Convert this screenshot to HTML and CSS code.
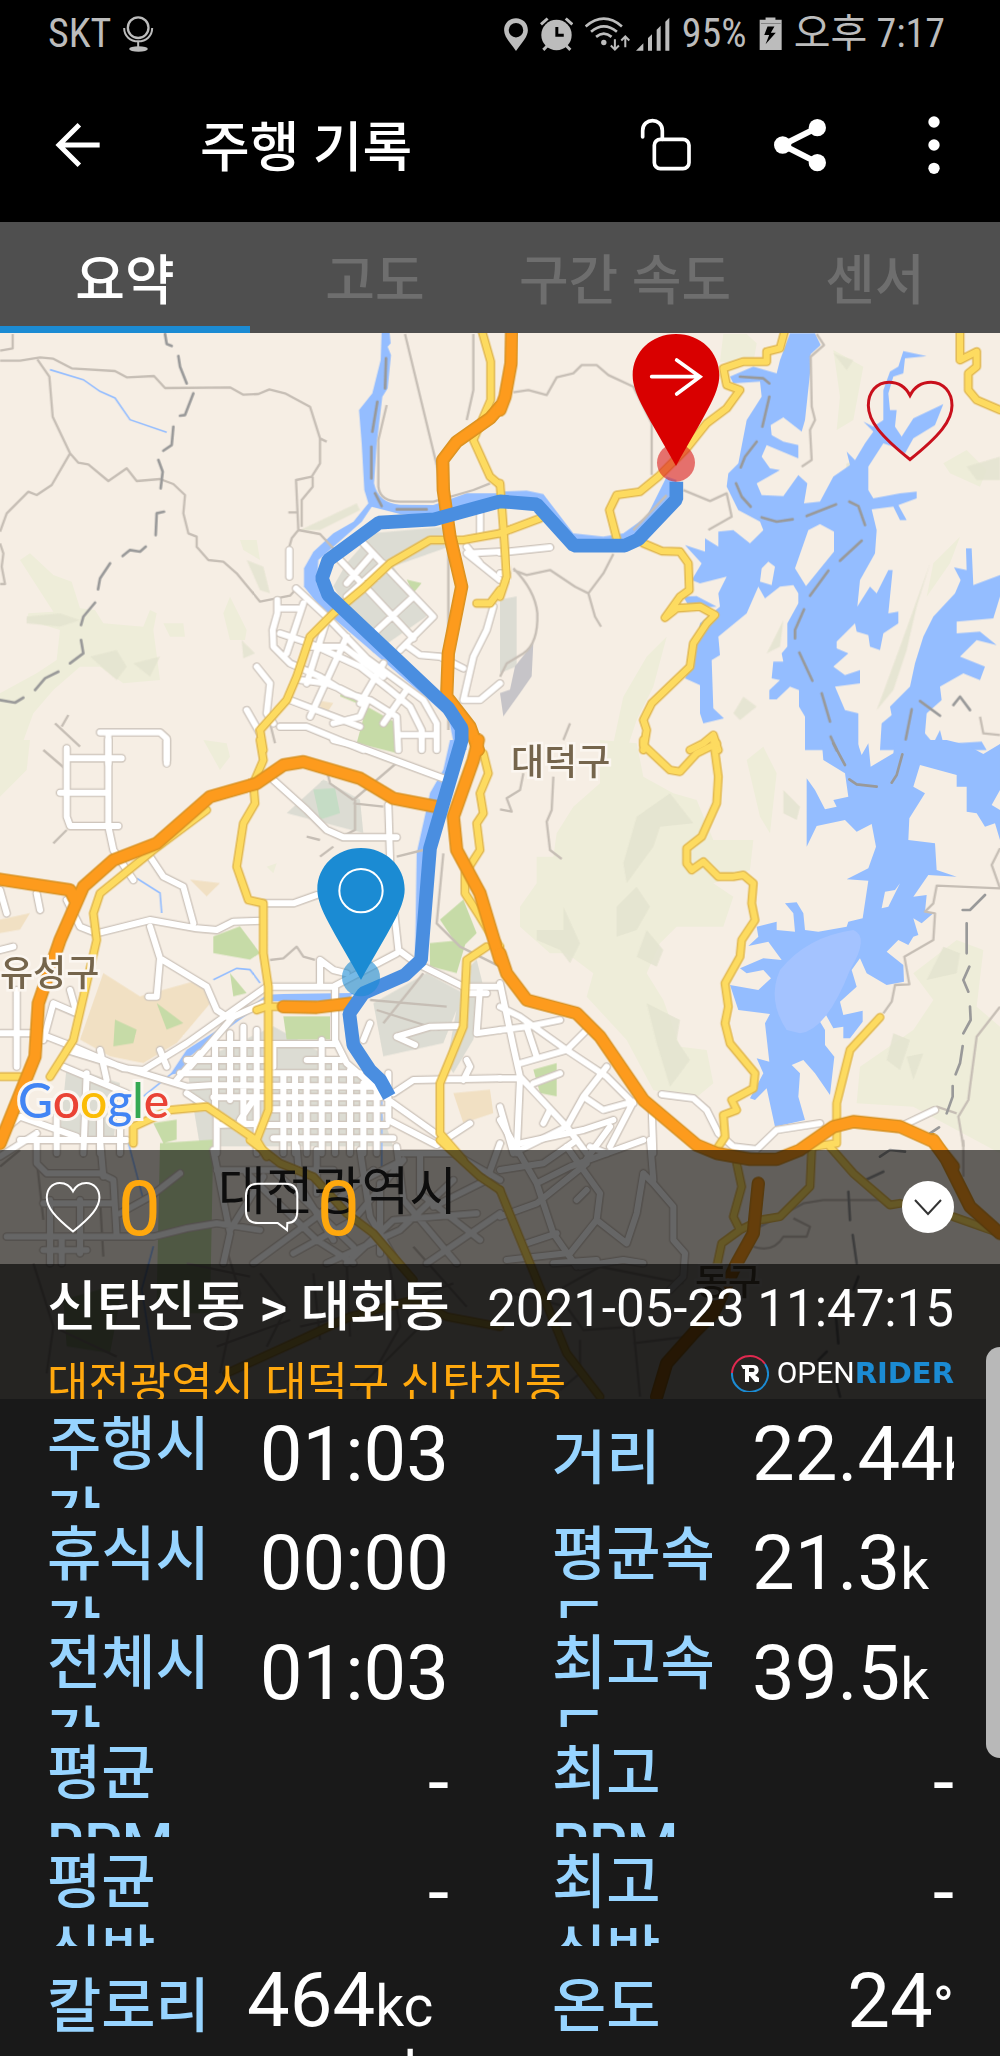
FILE: index.html
```html
<!DOCTYPE html>
<html lang="ko">
<head>
<meta charset="utf-8">
<meta name="viewport" content="width=device-width, initial-scale=1">
<title>주행 기록</title>
<link rel="stylesheet" href="styles.css">
</head>
<body>
<svg class="defs" aria-hidden="true">
  <symbol id="heart" viewBox="1098 146 264 248"><path vector-effect="non-scaling-stroke" d="M1230 195C1215 165 1190 155 1167 155C1130 155 1105 185 1105 225C1105 270 1140 315 1230 387C1320 315 1356 270 1356 225C1356 185 1330 155 1293 155C1270 155 1245 165 1230 195Z"/></symbol>
</svg>
<div class="screen">
  <header class="status">
    <div class="status-group">
      <span class="status-text">SKT</span>
      <svg class="mic" viewBox="363 46 92 108"><g fill="none" stroke="currentColor"><circle cx="408" cy="81" r="31" stroke-width="7"/><path d="M366 82C366 106 384 122 408 122S450 106 450 82M408 122V140" stroke-width="6"/></g><ellipse cx="409" cy="145" rx="28" ry="8" fill="currentColor"/></svg>
    </div>
    <div class="status-group">
      <svg class="pin-icon" viewBox="0 50 72 100"><path fill="currentColor" fill-rule="evenodd" d="M36 51C56 51 72 66 72 87C72 106 56 122 36 150C16 122 0 106 0 87C0 66 16 51 36 51ZM36 65A22 22 0 1 0 36 109A22 22 0 1 0 36 65Z"/></svg>
      <svg class="alarm" viewBox="108 50 100 102"><path stroke="currentColor" stroke-width="9" d="M111 72L131 54M206 72L186 54M118 149L134 133M200 149L184 133"/><circle cx="158" cy="104" r="46" fill="currentColor"/><path d="M159 80V105H180" fill="none" stroke="#000" stroke-width="9"/></svg>
      <svg class="wifi" viewBox="248 46 134 104"><g fill="none" stroke="currentColor" stroke-width="8"><path d="M250 74Q304 28 358 74M266 90Q304 58 343 90M281 105Q304 86 327 105"/><path d="M337 112V142M325 131L337 143L349 131M368 136V106M356 116L368 104L380 116" stroke-width="6"/></g><circle cx="304" cy="122" r="8" fill="currentColor"/></svg>
      <svg class="signal" viewBox="398 46 102 102"><path fill="currentColor" d="M398 147L420 125V147ZM434 147V109L446 98V147ZM460 147V84L472 72V147ZM486 147V60L498 48V147Z"/></svg>
      <span class="status-text">95%</span>
      <svg class="battery" viewBox="768 50 70 102"><path fill="currentColor" d="M788 51H818V58H837V150H770V58H788Z"/><path d="M774 69H834" stroke="#666" stroke-width="2"/><path fill="#000" d="M794 78L784 104H799L788 132L819 97H804L815 78Z"/></svg>
      <span class="status-text">오후 7:17</span>
    </div>
  </header>

  <div class="appbar">
    <button class="icon-btn" aria-label="뒤로"><svg width="46" height="46" viewBox="166 364 138 138"><path fill="none" stroke="#fff" stroke-width="15" d="M300 433H180M239 372L178 433L239 494"/></svg></button>
    <h1>주행 기록</h1>
    <button class="icon-btn" aria-label="잠금 해제"><svg width="52" height="54" viewBox="423 354 156 162"><g fill="none" stroke="#fff" stroke-width="11" stroke-linecap="round"><path d="M431 411V392C431 352 490 352 490 392V418"/><rect x="466" y="418" width="104" height="88" rx="18"/></g></svg></button>
    <button class="icon-btn" aria-label="공유"><svg width="54" height="54" viewBox="819 352 162 162"><path d="M952 381L848 433L952 486" fill="none" stroke="#fff" stroke-width="18"/><g fill="#fff"><circle cx="952" cy="381" r="26"/><circle cx="848" cy="433" r="26"/><circle cx="952" cy="486" r="26"/></g></svg></button>
    <button class="icon-btn" aria-label="더보기"><svg width="12" height="60" viewBox="1282 343 36 180"><g fill="#fff"><circle cx="1300" cy="364" r="17"/><circle cx="1300" cy="433" r="17"/><circle cx="1300" cy="503" r="17"/></g></svg></button>
  </div>

  <nav class="tabs">
    <a class="tab active" href="#summary">요약</a>
    <a class="tab" href="#altitude">고도</a>
    <a class="tab" href="#speed">구간 속도</a>
    <a class="tab" href="#sensor">센서</a>
  </nav>

  <section class="ride">
    <svg class="map" viewBox="0 0 1000 1066" preserveAspectRatio="xMidYMid slice" role="img" aria-label="주행 경로 지도">
      <defs>
        <g id="minor">
          <g transform="translate(0 -9)"><path d="M0 92L60 92L120 82L160 86L215 115L345 123L380 142L462 138L495 174L690 172L730 194L775 192L808 178L855 190L930 230L960 325L980 335M960 325V400L935 440L888 450L895 600L875 625L868 650M938 440V470L905 510V590M112 88L148 140L158 260L210 370L235 398L265 403L325 453L380 415L410 453L480 447L520 462L555 495L550 550L565 610L590 620L590 650L625 690L670 695L710 730L780 815L870 797L890 775M210 370L155 465L110 495L85 485L20 550L0 605M0 62L38 55V12M0 640L10 670L5 710L15 762H0M895 600L960 612L1000 655M1160 225L1135 330V470Q1140 515 1200 515H1300L1420 480L1470 460M865 547H890M1215 12L1345 550V1200M1420 12L1420 180L1400 270M810 1180L825 1240M165 1180L240 1250M205 1155L185 1190"/></g>
          <g transform="translate(1500 -9)"><path d="M40 187L85 180L140 195L170 142L220 130L245 105L290 105L325 135L400 170L455 280L455 435M550 480L630 513L680 490L695 560L625 600M950 12L972 45L932 80L935 230L945 270L930 300L935 390L905 410M340 672L310 730L265 790L225 770L150 720L80 735L40 720M265 790L285 860L303 890M40 715Q105 780 112 850Q115 940 70 970L20 1000L0 1040M500 495L400 600M1440 1160L1450 1210L1500 1215M210 1180L190 1230"/></g>
          <g transform="translate(0 1221)"><path d="M1060 180L1200 60M1065 180V270L1035 285M1060 180L990 130L980 90L930 70M1060 190L1150 200M920 290L960 300M960 350L1000 320M810 660L850 655L890 620L910 650L945 660M1330 340L1310 550L1380 620L1500 680M1190 350L1270 330M1150 850L1270 700M1130 810L1320 870M1110 780L1340 800M200 270L160 310M130 30L200 90"/></g>
          <g transform="translate(1500 1221)"><path d="M70 100L60 150L20 175L35 215L0 208M160 110L155 210L140 245L150 330L185 357M1150 820L1175 785L1185 735L1228 733L1213 650L1300 600L1305 520L1275 515L1300 490L1310 437L1500 445L1475 375L1500 325M1500 800L1430 890L1410 1040L1405 1080L1375 1130L1390 1220M1215 1150L1310 1100L1370 1120"/></g>
          <g transform="translate(0 2421)"><path d="M0 80L60 30M110 60L130 240M100 370L160 560L140 700M300 180L310 350M680 330L720 460L690 560L660 700M780 400L860 500L800 620M940 400L960 600M1040 370L1050 590M1160 330L1200 560L1120 700M1240 320L1400 500M650 620L870 540M900 560L1170 500L1360 430M1070 750L1260 560M560 370L750 410M180 570L350 650"/></g>
          <g transform="translate(1500 2421)"><path d="M780 260L910 190L970 180H1150M760 320Q820 340 850 290L920 290L930 260L880 235M0 450L200 500L250 570L400 560L420 770M140 470L300 380L550 430M400 610L560 590L650 540M240 600L240 700L180 750M1390 0V110"/></g>
        </g>
        <g id="streets">
          <g transform="translate(0 -9)"><path d="M868 660V740M888 775L980 860L1100 985L1270 1110L1310 1180V1260M832 810V850L818 900L820 950L870 1000L960 1040L1040 1090L1110 1110L1190 1160L1195 1260M835 835L900 835M840 910L930 940L1080 1010L1170 1080L1230 1130L1265 1200V1260M910 820L860 970M980 870L920 1060M1040 920L930 1160M870 1110L1080 1190M840 1190L920 1190L1090 1260M770 1010L810 1060L800 1150L820 1180M740 1140L780 1210M1020 1075L1100 1115L1080 1160L1000 1180M1150 1000L1080 1120M1220 1080L1150 1180M930 950L1030 950L1150 1040M900 1050L980 1060L1030 1080M1200 1215H1300M1020 690L1240 925M1090 640L1300 860L1200 960M1040 800L1150 700M1110 920L1240 800M1110 680L1040 760M1225 950L1260 975L1320 980L1390 1015M1500 665L1400 670L1500 750M1480 830L1460 900L1420 980L1390 1110H1440L1500 1060M1440 550V610M1400 650L1440 700M300 1207H480L500 1225V1300M325 1207V1300"/></g>
          <g transform="translate(1500 -9)"><path d="M0 668L150 652M0 730H20"/></g>
          <g transform="translate(0 1221)"><path d="M500 0V60M200 25V230L210 258H355M200 55H365M180 158H320M325 0V260L340 330L400 420M1000 0L1060 15L1330 115M820 120L920 210L980 270L1030 292H1190M1165 195L1172 420L1195 630L1250 670L1390 740L1500 740M790 490H880L950 465M785 542L700 545L650 570L590 565L450 540L290 580L240 560L200 480M450 350L490 410L550 440L580 550M450 560L480 655L470 770H445M480 655L620 740L650 810L680 830M800 740L560 910L430 990L370 985L220 920L130 885M800 740H1000L1190 640M960 660L1000 690L1040 700M960 660V740M0 880H110M50 750V980M0 450L20 520M110 460L120 510M0 630L40 620M160 790L230 820L210 750M130 900L160 790M1005 740V900L1040 970L1110 1030L1165 1080L1320 1190M1180 1060L1240 1020L1500 1015M1110 850L1090 900M1190 890L1290 860L1390 858M1190 890L1245 915M1440 740L1430 880L1500 870M1400 760H1460M570 980L700 830L790 790M640 912H1005M560 960H790M820 912V980M920 960H1025M540 1000H1080M640 1035L1120 1040M640 1072H1140M820 1108H1160M650 1155L780 1150M800 1155H1160M820 1195H1180M770 870V1240M730 860V1150M690 880V1080M645 910V1100M850 1000V1240M885 1000V1240M920 1000V1240M965 900V1240M1005 960V1240M1050 990V1240M1090 1030V1240M1130 1040V1240M1400 960L1410 980L1390 1020M1165 1000V1140L1310 1215L1410 1150M300 930L320 1020M190 980L380 1060M260 1000L250 1240M200 930L560 1040L640 1035M0 1180L60 1130L230 1190M60 1200H380M650 1240V1120L560 1060M170 1130V1240M720 1140L760 1080M300 1130V1240M360 1100V1240M480 930L500 980M530 1020L600 940"/></g>
          <g transform="translate(1500 1221)"><path d="M0 730L40 920L60 1010L200 1160L260 1240M0 800L60 830L200 930L320 1010L400 1090M0 870L80 860L180 840M60 970L200 930L260 870M0 1015H60L50 1240M80 860L110 950M0 1100L40 1240M200 1160L250 1070L320 980M250 1070L310 1110L400 1085L330 1220M200 1160L60 1230M130 1150L150 1110M455 1100L460 1240M485 1063L580 1075L620 1110L655 1180L700 1220L770 1228L830 1170L960 1150M1190 1165L1305 1110M270 1220L320 1240M180 1000L100 1030"/></g>
          <g transform="translate(0 2421)"><path d="M0 50L110 -20M110 0V70L140 100H300L340 120L350 290M20 290H460L560 265L650 250L780 270M150 180V370M185 290V370M240 180V340M130 330H260M130 190H340M300 0L310 110M640 30L660 130L690 280L670 370M790 110L690 270M740 100L950 300L1060 370M830 100L1060 320M890 20L900 140L1000 300M760 370L950 230L1120 90M880 340L1060 240L1210 60M980 370L1200 270L1360 120M1080 30L1110 230L1180 350M1190 20L1210 180L1370 370M1260 40V160L1440 300M1300 200L1460 120L1500 10M1040 370L1180 240L1430 220M1280 370L1500 220M360 220L450 170L540 100M1200 40L1360 40L1500 120M650 90H1000M950 30V160M1070 130L1210 60M1140 130V340"/></g>
          <g transform="translate(1500 2421)"><path d="M0 -60L110 130L160 280L230 380M60 10L250 -30L340 -60M0 90L130 70L230 0M110 130L210 80L430 0M0 230L110 190L260 70M200 20L300 160L290 240L210 340M250 70L330 -40M430 100L460 130L520 200L520 300L555 340L550 410L510 450M430 100L410 220L380 310L290 240M80 310L170 280M20 360L200 340M450 0L460 120M230 180L260 150M240 380L370 360L430 370M160 370L290 360"/></g>
        </g>
        <g id="yellow">
          <g transform="translate(0 -9)"><path d="M1445 0L1472 95V210L1420 330L1470 440L1500 465M1500 610L1390 630L1290 630L1170 700L1090 775L1000 850L930 920L890 1040L860 1110L780 1200L790 1260M1500 780L1470 820H1430"/></g>
          <g transform="translate(1500 -9)"><path d="M855 0L840 55L800 65L800 95L730 95L670 115L680 165L720 180L680 235L620 280L560 355L475 440L420 485L350 495L328 540L350 625M430 640L485 663L540 665L565 700L568 780L540 800L495 863L530 835L600 830L645 855L620 880L580 940L570 1010L455 1120L430 1170L440 1200L430 1260M1380 0V90L1430 65L1430 110L1405 130V180L1430 210L1500 240M0 460L10 590L20 740L0 800M0 610L120 565M570 1260L610 1240L640 1215L655 1260"/></g>
          <g transform="translate(0 1221)"><path d="M780 0L790 60L760 130L765 190L730 250L710 380L745 480L790 490V640L805 740V1110L770 1200L800 1250M1450 40L1465 100L1440 160L1450 220L1430 250L1440 330L1395 400L1395 460L1440 530L1470 580L1500 620M1460 620L1400 660L1390 860L1320 1030V1180L1390 1260M620 210L460 330L300 460L280 520L290 600L220 900L150 1010M60 1010H0M400 1210V1160L510 1110L620 1100L760 1195M770 810L800 800H850"/></g>
          <g transform="translate(1500 1221)"><path d="M430 0V15L510 90L540 95L590 40L650 10M640 0L655 110L650 190L605 290L560 325V370L575 390L610 365L655 410H700L730 405L760 430L755 490L765 540L725 600L720 650L675 730L685 800L675 850L690 910L765 1000L760 1045L695 1080L710 1110L670 1125L675 1190L655 1220M1140 832L1050 930L1010 1090V1210M940 1220L1010 1210"/></g>
          <g transform="translate(0 2421)"><path d="M750 0L840 70L940 110L1040 220L1120 280L1240 420M1320 0L1440 110L1500 150M680 700L900 600L1050 530L1240 480L1340 530L1500 560"/></g>
          <g transform="translate(1500 2421)"><path d="M0 150L90 370L200 640L300 770M710 70L725 140L700 230L720 270L665 310L650 380M720 270L780 240L840 230L930 140L935 30M990 20L1060 100L1170 195L1200 190M1360 230L1500 280"/></g>
        </g>
        <g id="highway">
          <g transform="translate(0 -9)"><path d="M1500 230L1470 265L1370 335L1328 390L1330 480L1350 620L1385 770L1345 970L1340 1100L1410 1190L1435 1260"/></g>
          <g transform="translate(1500 -9)"><path d="M35 0L33 100L15 200L0 240"/></g>
          <g transform="translate(0 1221)"><path d="M1435 0L1420 60L1360 230L1370 330L1440 460L1500 660M0 418L210 450L225 480M0 1210L105 950L115 790L180 600L250 440L340 360L470 310L630 170L770 130L850 75L910 65L1080 115L1180 175L1310 200M850 800L950 802L1050 790"/></g>
          <g transform="translate(1500 1221)"><path d="M0 640L20 700L80 780L230 820L300 890L430 1080L590 1215L650 1240L750 1258H830L900 1230L1000 1160L1060 1145L1200 1160L1300 1205L1360 1280"/></g>
          <g transform="translate(1500 2421)"><path d="M1300 0L1340 60L1410 200L1500 280M775 130L760 280L710 370L640 520L580 580L500 670L470 770"/></g>
        </g>
        <g id="dashes">
          <g transform="translate(0 -9)"><path d="M495 12L500 42L515 48M535 78L540 110L560 160M580 190L555 255L540 257M520 290L515 345L490 362M475 390L488 425L482 475M492 545L470 550L467 615M437 650L420 665L390 660L368 678M330 700L300 745L294 778M285 818L250 860L243 885M243 930L250 970L210 1000M175 1025L135 1045L105 1080M70 1103L45 1118L0 1110M1158 85L1155 175M1132 215L1117 305M1114 350V445M1125 490L1145 528M1190 538H1280"/></g>
          <g transform="translate(1500 -9)"><path d="M720 140L790 145L808 160M808 200L787 290M770 335L735 380L722 412M708 460L725 500L752 530M785 562L830 575L878 568M920 558L1008 523M1048 515L1075 528L1095 585M1085 632L1020 692M985 722L930 797M912 838L885 900V925M898 968L937 1052M965 1090L990 1175M992 1220L1010 1260M1235 1138L1217 1228M1260 1113L1320 1157M1360 1125L1380 1100L1410 1140"/></g>
          <g transform="translate(1500 1221)"><path d="M1000 10L1035 75M1048 118L1070 133L1130 140M1207 43L1190 105L1175 128M1455 465L1410 510H1388M1400 550V640M1408 680L1390 720L1405 755M1410 800L1412 840L1390 880M1388 918L1380 970L1367 1003M1358 1038V1070L1340 1120M1317 1162L1290 1180M1140 1250L1170 1230L1215 1235"/></g>
          <g transform="translate(1500 2421)"><path d="M1150 95L1100 118M1045 155L1050 240M1058 285L1070 370M1075 410L1060 450M1005 500L1015 610M980 635L955 660M1005 710L1020 770"/></g>
        </g>
      </defs>
      <rect width="1000" height="1066" fill="#f6eee4"/>
      <g transform="scale(.33333)">
        <g fill="#eeedd9">
          <g transform="translate(0 -9)"><path d="M60 690L90 670L160 735L215 755L240 835L285 840L310 880L430 890L450 840L470 850L460 900L480 1050L370 1060L300 1010L240 1010L160 1080L100 1150L60 1260H0V1090L110 1030L170 990L180 900L80 870L85 850L160 845ZM720 630L770 630L780 690L730 660ZM670 850L690 800L740 900L735 930L690 930ZM490 880L550 880L555 920L510 920Z"/></g>
          <g transform="translate(1500 -9)"><path d="M670 12H740L770 40L760 100L660 95ZM1000 60L1090 110L1060 270L1010 300L1020 200ZM1330 400L1400 360L1460 420L1440 470L1350 430ZM380 1260L340 1240L370 1100L440 980L500 920L460 1070L410 1170ZM1280 800L1300 700L1380 620L1350 700Z"/></g>
          <g transform="translate(0 1221)"><path d="M0 0H90L80 90L0 170ZM610 0L680 10L690 50L660 90ZM800 380L830 370L820 400Z"/></g>
          <g transform="translate(1500 1221)"><path d="M300 0L410 10L430 110L520 160L590 180L640 300L760 300L750 390L640 430L700 470L670 560L530 560L480 610L440 700L490 780L540 920L620 930L640 1030L580 1080L460 1050L380 900L260 770L280 700L200 640L150 640L60 560L60 500L110 430V350L160 350L170 280L220 200L300 130ZM740 60L790 20L830 100L810 280L780 230ZM1240 700L1370 600L1450 630L1430 800L1500 860V1240L1240 1100L1070 1090L1080 980L1240 870L1300 780Z"/></g>
        </g>
        <g fill="#e3e3cf" opacity=".8">
          <g transform="translate(1500 1221)"><path d="M410 230L510 160L580 250L480 260L460 320L380 430L370 370ZM440 790L540 840L530 900L570 960L510 1040L470 910ZM110 570H190V500L240 610L210 670L180 630L110 600ZM440 570L490 630L470 680L410 650ZM350 500L410 440L450 500L410 570L350 590ZM850 150L900 200L890 240L850 220ZM1330 620L1380 640L1370 700L1280 720ZM1180 880L1230 900L1200 990L1160 960ZM1220 950L1270 940L1240 1020Z"/></g>
          <g transform="translate(0 -9)"><path d="M80 860L180 850L240 870L180 890L80 880ZM270 980L350 960L380 1010L350 1050ZM400 1000L480 980L450 1040ZM900 600L1070 520L1080 540L960 600ZM740 690L790 710L810 790L780 780ZM725 930L765 970L730 985Z"/></g>
          <g transform="translate(1500 -9)"><path d="M1000 70L1060 90L1040 120ZM1040 400L1090 390L1060 480L1030 500ZM1290 700L1250 830L1220 960L1180 1080L1130 1140L1200 950ZM1400 410L1500 380V450L1430 450ZM820 930L850 870L840 950L800 970ZM700 1150L730 1100L770 1130L720 1170Z"/></g>
        </g>
        <g fill="#dcdcd3">
          <path d="M1120 600L1350 580V640L1180 700L1280 850L1120 960L1000 760L1040 690ZM1500 800L1550 790V1000L1500 1020Z"/>
          <path d="M1120 2010L1280 1920L1390 1980L1330 2130L1150 2170ZM860 1440L970 1340L1080 1400L1090 1500ZM1390 1920L1430 1880L1450 1960L1420 2120L1360 2220L1340 2190Z"/>
          <path d="M560 2200L820 2080L1110 2240L1180 2440H600ZM200 2200L360 2250L340 2430L180 2400Z"/>
          <path fill="#c6c4c8" d="M1545 1000L1600 930L1595 1030L1560 1080L1510 1150L1500 1080L1530 1070Z"/>
        </g>
        <g fill="#c6dba7">
          <path d="M1100 1120L1190 1170V1260L1070 1230ZM1030 1060L1090 1090L1070 1110L1020 1090ZM1220 740L1265 750L1240 780ZM640 1810L720 1780L780 1860L750 1880L640 1860ZM1320 1760L1390 1700L1430 1800L1380 1850ZM1290 1830L1400 1820L1370 1920L1290 1900ZM850 2050H990V2120H860ZM460 2370L530 2360L530 2420L490 2430ZM690 1920L740 1980L700 1990ZM1600 2210L1670 2190L1670 2290L1620 2280ZM480 2430L640 2420L630 2940H560L470 2900ZM190 2900L370 2850L330 3060L200 3040Z"/>
          <path fill="#c5dcc5" d="M940 1370L1005 1365L1020 1440L960 1460Z"/>
        </g>
        <g fill="#f1e0c3"><path d="M310 1920L420 1990L600 1940L640 2000L530 2130L430 2190L330 2170L240 2120ZM1360 2280L1470 2270L1480 2340L1390 2370ZM570 1640L660 1650L620 1690ZM0 1760L90 1740L60 1790L0 1800ZM940 1100L1000 1110L980 1140Z"/></g>
        <path fill="#c6dba7" d="M345 2060L410 2090L400 2130L340 2140ZM470 2010L550 2070L500 2090Z"/>
        <g fill="#94bdff">
          <g transform="translate(1500 -9)">
            <path d="M870 10L945 10L962 45L932 72L930 130L915 270L905 305L850 262L812 285L815 315L850 335L895 345L895 385L800 345L785 380L810 415L840 420L770 460L785 495L850 498L895 435L922 460L912 520L960 515L1000 440L1050 405L1040 365L1065 390L1095 340L1120 305L1090 275L1120 290L1150 270L1150 180L1170 125L1195 110L1210 63L1280 78L1215 85L1210 130L1180 140L1165 190L1170 240L1190 240L1185 290L1205 320L1240 265L1330 222L1305 285L1240 325L1215 370L1180 350L1150 340L1105 410L1105 480L1120 505L1200 490L1250 485L1250 505L1195 525L1220 570L1200 570L1180 530L1115 538L1130 600L1125 670L1080 750L1072 830L1110 770L1130 790L1165 720L1178 720L1165 850L1195 845L1195 880L1150 910L1140 960L1110 950L1105 915L1070 905L1065 880L1010 935L1010 955L1045 970L1000 1010L1035 1035L1080 1020L1080 1060L1005 1070L1035 1140L1075 1150L1075 1260L915 1260L915 1160L897 1130L897 1080L870 1070L830 1108L808 1108L808 1080L840 1050L815 1045L820 995L850 995L845 970L862 950L862 880L895 820L895 790L880 765L840 770L795 805L775 770L740 850L655 920L660 975L635 990L640 1135L672 1165L610 1180L600 1150L600 1065L555 1045L580 990L600 880L660 830L655 790L680 740L600 760L575 750L605 700L555 645L615 665L615 625L655 650L655 605L700 600L750 640L790 600L780 575L715 540L680 470L685 430L715 400L740 270L785 200L780 155L700 160L690 140L760 110L830 130L840 90Z"/>
            <path d="M1500 735L1420 765L1415 655L1398 655L1400 720L1362 712L1382 750L1365 790L1300 860L1270 920L1245 1000L1230 1070L1170 1130L1175 1155L1145 1180L1140 1260H1460L1445 1235L1360 1240L1330 1240L1320 1200L1300 1240L1275 1210L1280 1150L1325 1110L1320 1070L1390 1030L1440 1050L1455 1010L1380 980L1430 930L1490 945L1440 905L1370 910V875L1480 865L1500 800Z"/>
            <path fill="#f6eee4" d="M925 600L960 582L1002 605V665L918 768L885 715ZM805 695L825 710L815 765L780 755L785 715Z"/>
            <path d="M0 485L80 482L130 492L220 610L310 620L370 610L440 560L500 440L530 450L510 530L400 640L210 640L110 520H0ZM550 800L590 798L650 830L570 835Z"/>
          </g>
          <g transform="translate(1500 1221)"><path d="M915 0L965 0L970 60L1035 100L1045 170L1000 180L1010 200L975 208L945 150L920 115V320L950 258L1035 240L1070 275L1115 252L1128 320L1105 385L1040 418L1105 422L1088 535L1045 545L1040 560L955 575L915 570L910 520L890 487L855 490L880 520L885 575L830 570V545L770 560L775 590L745 618L805 605L845 660L790 655L720 685L740 700L790 690L813 715L775 750L690 735L715 810L810 822L795 850L808 965L770 955L790 1000L750 1075L765 1080L800 1045L825 1160L915 1140L895 1070L900 1000L875 975L910 960L945 1000L990 1065L1003 950L975 915V870L957 840L978 825L1000 865L1030 860V895H1050L1088 845V812L1030 825L1020 785L1070 740L1055 690L1080 655L1100 700L1160 735L1212 725L1210 675L1160 635L1195 600L1225 615L1240 590L1255 585L1240 535L1265 550L1300 520L1275 515L1280 465L1240 470L1285 405L1370 410L1310 390L1305 310L1225 300L1228 235L1275 160L1240 140L1260 75L1370 105V140H1400V215L1430 220L1455 260L1485 250L1500 300V210L1475 195L1500 150V12L1450 42L1400 15L1340 0H1185L1180 40L1112 80L1105 10L1085 45L1070 0Z"/><path fill="#a4c3ff" d="M860 870Q800 780 840 690Q920 590 1060 570Q1110 590 1050 690Q980 870 900 880Z"/><path fill="#f6eee4" d="M1155 455L1185 450L1200 430L1165 500L1145 505Z"/></g>
          <g transform="translate(0 -9)"><path d="M1145 0H1168L1172 40L1163 50L1173 75L1163 175L1147 200L1130 340L1122 460Q1135 520 1200 524L1300 525L1400 490H1500V510L1350 552H1200L1115 530L1085 575L1000 650L955 690L950 760L1010 835L1345 1160L1365 1260H1400L1380 1190L960 830L912 770V715L940 665L1000 610L1060 575L1105 520L1093 480L1085 340L1077 240L1117 190L1142 90Z"/></g>
          <path d="M1350 1221H1400L1290 1560L1265 1880H1245L1250 1560L1290 1380L1330 1310ZM1060 1980L850 1983L800 1985L700 2060L560 2150L510 2225L540 2220L570 2170L720 2060L800 2005H1040ZM1030 2040L1090 2160L1160 2290L1130 2240L1040 2120Z"/>
          <path fill="none" stroke="#94bdff" stroke-width="5" d="M150 110L250 140L300 175L345 195L390 260L500 298M410 1636L480 1680L485 1740M640 1940L710 1906L750 1910L780 1950M385 2430L430 2600M1145 2300V2500M460 2740L425 2870L460 3090M530 2210L430 2290"/>
        </g>
        <use href="#minor" class="minor"/>
        <use href="#streets" class="street-case"/>
        <use href="#streets" class="street"/>
        <use href="#dashes" class="dash"/>
        <use href="#yellow" class="yellow-case"/>
        <use href="#yellow" class="yellow"/>
        <use href="#highway" class="highway-case"/>
        <use href="#highway" class="highway"/>
        <path class="route" d="M2029 446V499L1915 619L1874 638H1722L1610 514L1500 505L1303 559L1137 569L985 681L966 736L985 786L1345 1126L1385 1186V1221L1290 1546L1263 1881L1215 1926L1090 1981L1048 2041L1060 2136L1110 2212L1140 2240L1168 2291"/>
        <g transform="translate(1500 -9)"><circle cx="528" cy="398" r="57" fill="#db1d1d" fill-opacity=".6"/><path fill="#d90000" d="M528 12C602 12 658 66 658 136C658 194 610 260 528 408C446 260 398 194 398 136C398 66 454 12 528 12Z"/><path d="M455 140H600M530 90L600 140L530 192" fill="none" stroke="#fff" stroke-width="11" stroke-linecap="round"/></g>
        <g transform="translate(0 1221)"><circle cx="1083" cy="712" r="57" fill="#1b8bd3" fill-opacity=".6"/><path fill="#1b8bd3" d="M1083 324C1157 324 1214 378 1214 448C1214 506 1165 572 1083 720C1001 572 952 506 952 448C952 378 1009 324 1083 324Z"/><circle cx="1083" cy="452" r="65" fill="none" stroke="#fff" stroke-width="6"/></g>
      </g>
      <g class="place">
        <text x="511" y="442">대덕구</text>
        <text x="0" y="653">유성구</text>
        <text x="695" y="962">동구</text>
        <text class="city" x="218" y="877">대전광역시</text>
      </g>
      <text class="google" x="18" y="785"><tspan fill="#4285f4">G</tspan><tspan fill="#ea4335">o</tspan><tspan fill="#fbbc05">o</tspan><tspan fill="#4285f4">g</tspan><tspan fill="#34a853">l</tspan><tspan fill="#ea4335">e</tspan></text>
    </svg>

    <div class="map-view">
      <button class="favorite" aria-label="즐겨찾기"><svg width="88" height="83"><use href="#heart"/></svg></button>
    </div>
    <div class="social">
      <button class="count"><svg width="56" height="52"><use href="#heart"/></svg><span>0</span></button>
      <button class="count"><svg width="56" height="52" viewBox="732 124 168 156"><path vector-effect="non-scaling-stroke" d="M774 132H856Q892 132 892 168V214Q892 250 862 250L861 271L833 250H774Q738 250 738 214V168Q738 132 774 132Z"/></svg><span>0</span></button>
      <button class="collapse" aria-label="접기"><svg width="30" height="18" viewBox="0 0 30 18"><path d="M2 2L15 16L28 2" fill="none" stroke="#333" stroke-width="2"/></svg></button>
    </div>
    <div class="ride-head">
      <div class="ride-line">
        <h2>신탄진동 &gt; 대화동</h2>
        <time datetime="2021-05-23T11:47:15">2021-05-23 11:47:15</time>
      </div>
      <div class="ride-line place-line">
        <p>대전광역시 대덕구 신탄진동</p>
        <div class="brand">
          <svg width="38" height="38" viewBox="0 0 38 38"><path d="M1 19A18 18 0 0 1 34 10" fill="none" stroke="#e0294f" stroke-width="2"/><path d="M1 19A18 18 0 1 0 34 10" fill="none" stroke="#1b8bd3" stroke-width="2"/><path fill="#fff" fill-rule="evenodd" d="M10 11H23C29 11 29 20 24 21L28 24V28H24L19 22H18V28H14V15H12ZM18 14V18H22C24 18 24 14 22 14Z"/></svg>
          <span class="open">OPEN</span><span class="rider">RIDER</span>
        </div>
      </div>
    </div>
  </section>

  <dl class="stats" id="summary">
    <div class="stat"><dt>주행시간</dt><dd>01:03</dd></div>
    <div class="stat"><dt>거리</dt><dd class="long">22.44<small>k</small></dd></div>
    <div class="stat"><dt>휴식시간</dt><dd>00:00</dd></div>
    <div class="stat"><dt>평균속도</dt><dd class="long">21.3<small>k</small></dd></div>
    <div class="stat"><dt>전체시간</dt><dd>01:03</dd></div>
    <div class="stat"><dt>최고속도</dt><dd class="long">39.5<small>k</small></dd></div>
    <div class="stat"><dt>평균 RPM</dt><dd>-</dd></div>
    <div class="stat"><dt>최고 RPM</dt><dd>-</dd></div>
    <div class="stat"><dt>평균 심박</dt><dd>-</dd></div>
    <div class="stat"><dt>최고 심박</dt><dd>-</dd></div>
    <div class="stat"><dt>칼로리</dt><dd class="long two-line">464<small>kc</small><small class="rest">al</small></dd></div>
    <div class="stat"><dt>온도</dt><dd>24<small>°</small></dd></div>
  </dl>
  <div class="edge-handle"></div>
</div>
</body>
</html>
```
FILE: styles.css
```css
* { box-sizing: border-box; }

body {
  margin: 0;
  background: #191919;
  color: #fff;
  font-family: Roboto, "Noto Sans CJK KR", sans-serif;
}

h1, h2, p, dl, dd { margin: 0; font-weight: 400; }

button {
  margin: 0;
  padding: 0;
  border: 0;
  background: none;
  color: inherit;
  font: inherit;
}

svg { display: block; }

.defs { position: absolute; width: 0; height: 0; }

.screen {
  position: relative;
  display: flex;
  flex-direction: column;
  min-height: 100vh;
  overflow: hidden;
}

/* Status bar */
.status {
  display: flex;
  justify-content: space-between;
  align-items: center;
  height: 68px;
  padding: 0 55px 0 48px;
  background: #000;
  color: #bcbcbc;
}

.status-group { display: flex; align-items: center; gap: 12px; }
.status-text { font-family: "Roboto Condensed", Roboto, "Noto Sans CJK KR", sans-serif; font-size: 40px; line-height: 40px; white-space: nowrap; }
.mic { width: 31px; height: 36px; }
.pin-icon { width: 24px; height: 33px; }
.alarm { width: 33px; height: 34px; }
.wifi { width: 45px; height: 35px; }
.signal { width: 34px; height: 34px; margin-left: -6px; }
.battery { width: 23px; height: 34px; }

/* App bar */
.appbar {
  display: flex;
  align-items: center;
  gap: 74px;
  height: 154px;
  padding: 0 36px 0 48px;
  background: #000;
}

.appbar h1 { flex: 1; padding: 8px 0 0 18px; font-size: 54px; font-weight: 500; line-height: 72px; }
.icon-btn { display: grid; place-items: center; width: 60px; height: 60px; }

/* Tabs */
.tabs { display: grid; grid-template-columns: repeat(4, 1fr); background: #4f4f4f; }

.tab {
  height: 111px;
  padding-top: 8px;
  border-bottom: 7px solid transparent;
  color: #6e6e6e;
  font-size: 54px;
  font-weight: 500;
  line-height: 103px;
  text-align: center;
  text-decoration: none;
  white-space: nowrap;
}

.tab.active { border-color: #1b8bd3; color: #fff; }

/* Map */
.ride { position: relative; overflow: hidden; }
.map { position: absolute; inset: 0; width: 100%; height: 100%; }
.minor, .street, .street-case, .yellow, .yellow-case, .highway, .highway-case, .dash, .route { fill: none; stroke-linejoin: round; }
.minor { stroke: #c6beb5; stroke-width: 7; }
.street-case { stroke: #cfc6bd; stroke-width: 26; stroke-linecap: round; }
.street { stroke: #fff; stroke-width: 18; stroke-linecap: round; }
.dash { stroke: #999; stroke-width: 8; stroke-linecap: round; }
.yellow-case { stroke: #e2b950; stroke-width: 27; stroke-linecap: round; }
.yellow { stroke: #fddb60; stroke-width: 18; stroke-linecap: round; }
.highway-case { stroke: #d99222; stroke-width: 40; stroke-linecap: round; }
.highway { stroke: #fd9b1d; stroke-width: 31; stroke-linecap: round; }
.route { stroke: #4a8ee0; stroke-width: 41; stroke-linejoin: bevel; }
.place { font-family: "Noto Sans CJK KR", sans-serif; font-size: 36px; font-weight: 500; fill: #75654c; stroke: #fbf6f0; stroke-width: 5; paint-order: stroke; }
.place .city { font-size: 52px; font-weight: 400; fill: #222; stroke: none; }
.google { font-family: Lato, sans-serif; font-size: 48px; font-weight: 500; stroke: #fbf6f0; stroke-width: 6; paint-order: stroke; }

.map-view { position: relative; display: flex; justify-content: flex-end; align-items: flex-start; height: 817px; padding: 46px 46px 0; }
.favorite { fill: none; stroke: #c9101c; stroke-width: 3; }

/* Likes and comments */
.social {
  position: relative;
  display: flex;
  align-items: center;
  height: 114px;
  padding: 0 46px 0 45px;
  background: rgba(0, 0, 0, .6);
}

.count { display: flex; align-items: center; gap: 17px; width: 199px; color: #ffa80d; font-size: 76px; line-height: 90px; }
.count span { padding-top: 4px; }
.count svg { fill: none; stroke: #fff; stroke-width: 2; }
.collapse { display: grid; place-items: center; width: 52px; height: 52px; margin-left: auto; border-radius: 50%; background: #fff; }

/* Ride heading */
.ride-head { position: relative; height: 135px; padding: 0 46px 0 47px; overflow: hidden; background: rgba(0, 0, 0, .85); }
.ride-line { display: flex; justify-content: space-between; align-items: baseline; white-space: nowrap; }
.ride-line h2 { font-size: 54px; font-weight: 500; line-height: 88px; }
.ride-line time { font-size: 51px; line-height: 88px; }
.place-line { align-items: flex-start; }
.place-line p { color: #ffa80d; font-size: 45px; line-height: 64px; }
.brand { display: flex; align-items: center; height: 40px; line-height: 40px; font-size: 30px; }
.brand svg { margin-right: 8px; }
.rider { color: #1b8bd3; font-family: "DejaVu Sans", sans-serif; font-size: 29px; font-weight: 700; }

/* Statistics */
.stats {
  flex: 1;
  display: grid;
  grid-template-columns: 1fr 1fr;
  grid-auto-rows: 109px;
  align-content: space-between;
  column-gap: 103px;
  padding: 0 46px 0 47px;
}

.stat { display: grid; grid-template: 109px / 1fr 202px; align-items: center; overflow: hidden; }
.stat dt { max-height: 100%; padding: 10px 30px 0 0; overflow: hidden; color: #97d4ff; font-size: 59px; font-weight: 500; line-height: 71px; }
.stat dd { max-height: 100%; font-size: 76px; line-height: 90px; text-align: right; white-space: nowrap; }
.stat dd small { font-size: 57px; line-height: 57px; }
.stat dd.long { text-align: left; }
.stat dd.two-line { padding-top: 8px; }
.stat dd .rest { display: block; padding-right: 32px; text-align: right; line-height: 56px; }

.edge-handle { position: absolute; top: 1347px; right: 0; width: 14px; height: 411px; border-radius: 14px 0 0 14px; background: #b8b8b8; }
```
